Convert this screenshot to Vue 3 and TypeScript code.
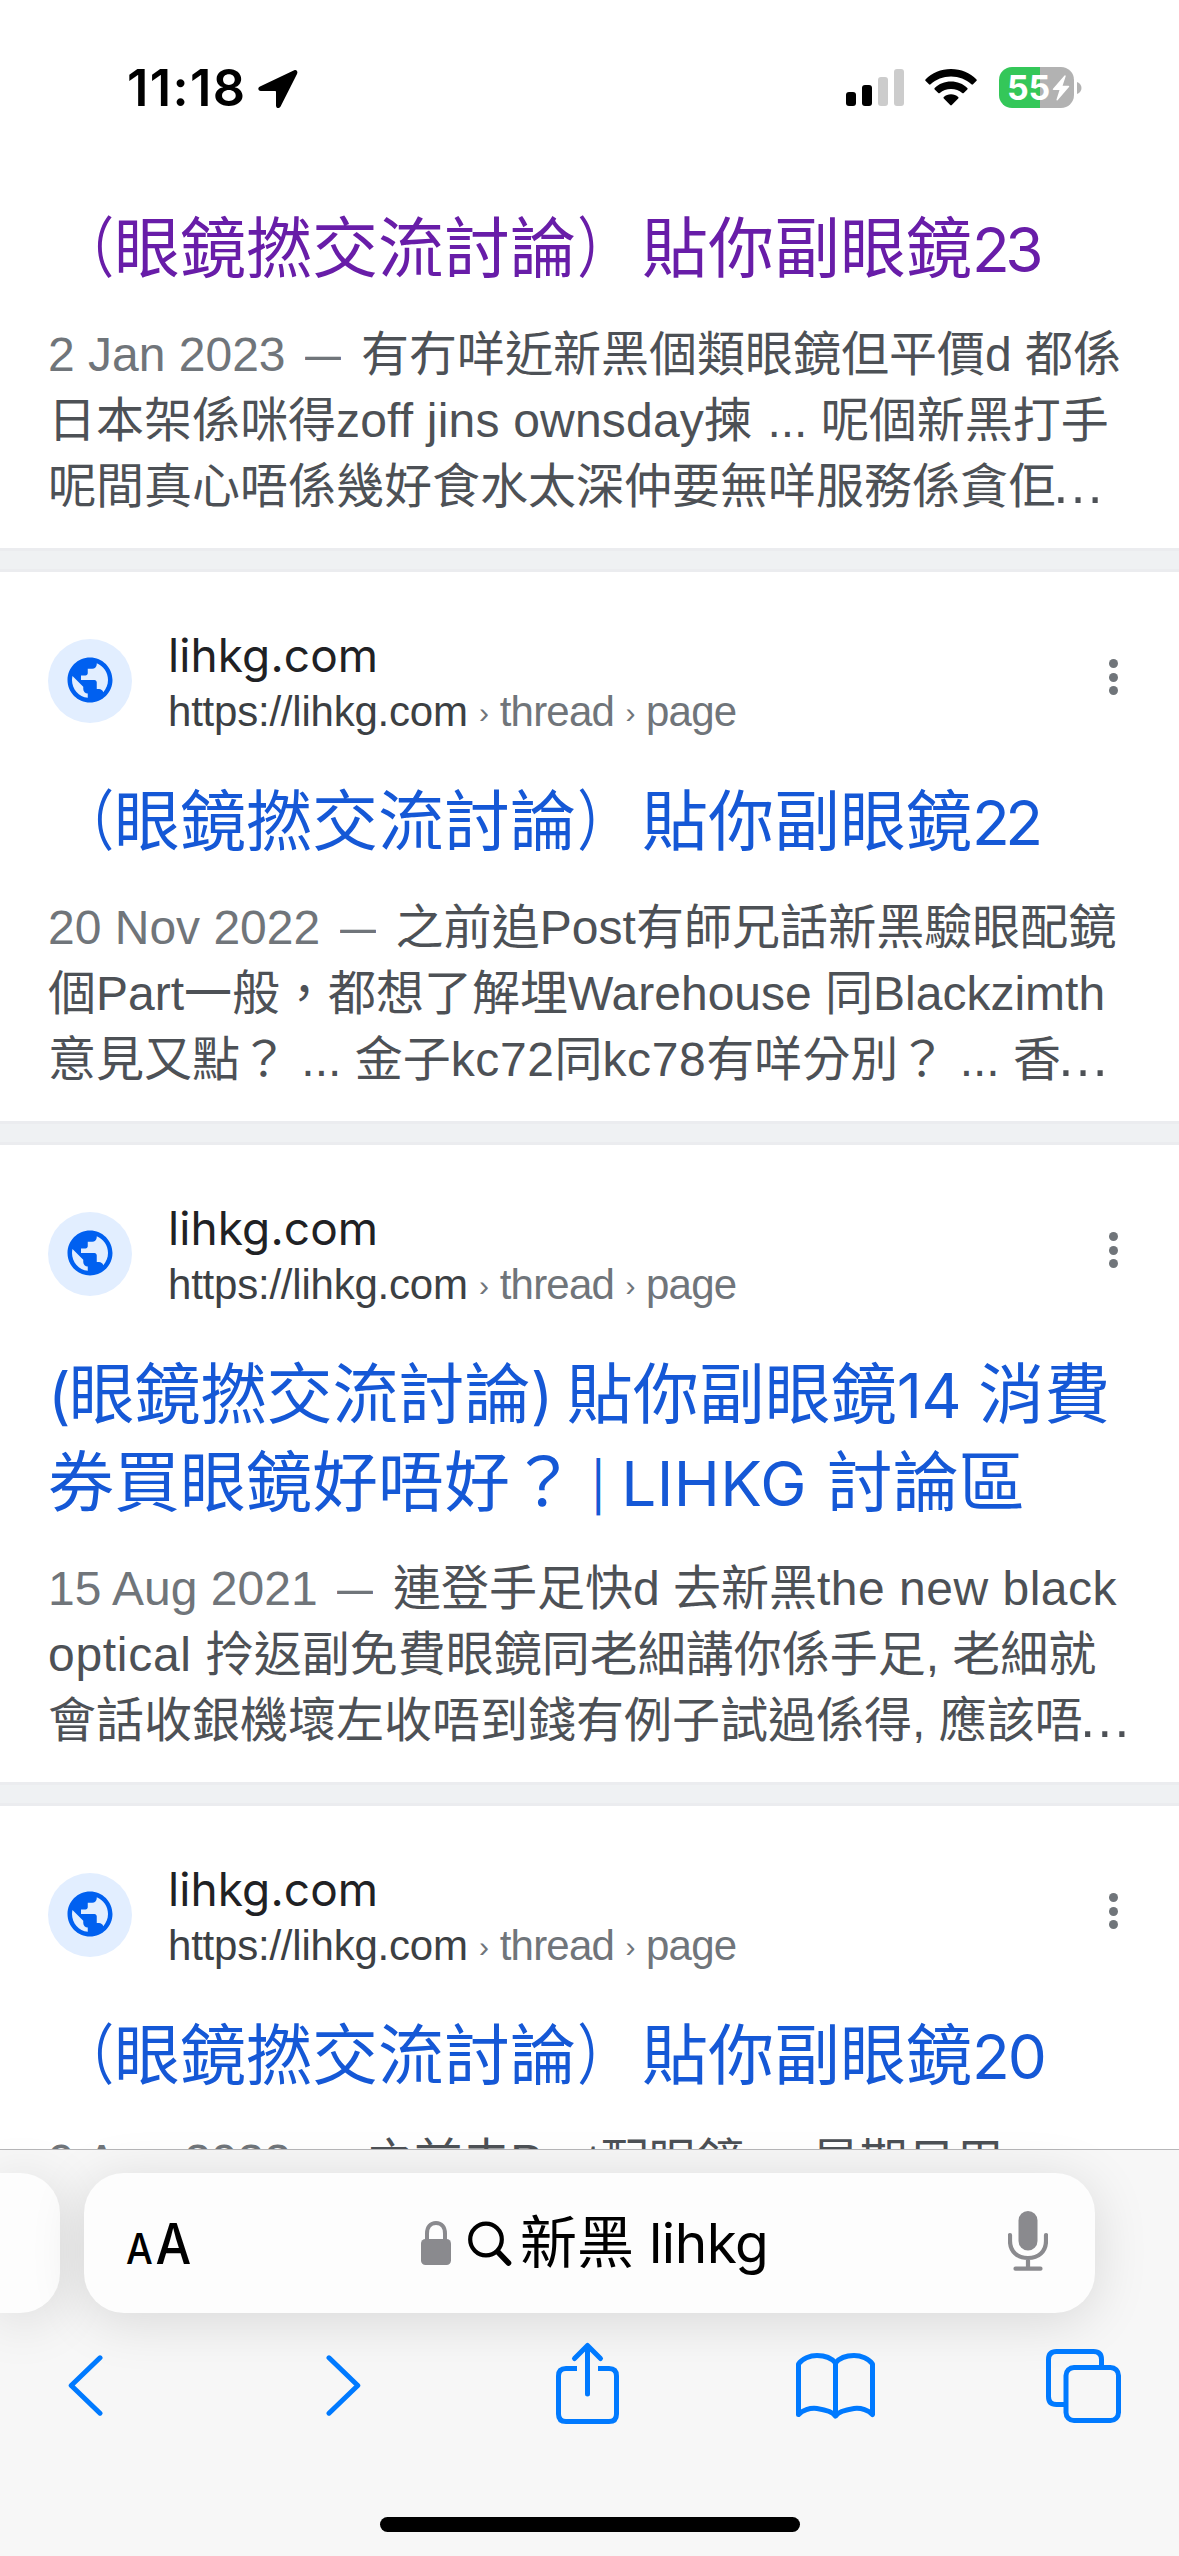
<script setup lang="ts">
// A piece of a line: its text and, optionally, its tracking in pixels.
type Piece = [text: string, tracking?: number]

interface Result {
  title: Piece[][]
  visited?: boolean
  header: boolean
  date: string
  lines: Piece[][]
  truncated?: boolean
}

const results: Result[] = [
  {
    title: [[['（'], ['眼鏡撚交流討論'], ['）'], ['貼你副眼鏡'], ['23', -4.5]]],
    visited: true,
    header: false,
    date: '2 Jan 2023',
    lines: [
      [['有冇咩近新黑個類眼鏡但平價d 都係']],
      [['日本架係咪得'], ['zoff jins ownsday', 0.2], ['揀 ', 1], ['... 呢個新黑打手']],
      [['呢間真心唔係幾好食水太深仲要無咩服務係貪佢']],
    ],
    truncated: true,
  },
  {
    title: [[['（'], ['眼鏡撚交流討論'], ['）'], ['貼你副眼鏡'], ['22', -4.5]]],
    header: true,
    date: '20 Nov 2022',
    lines: [
      [['之前追Post有師兄話新黑驗眼配鏡', 0.05]],
      [['個Part一般，都想了解埋Warehouse 同Blackzimth']],
      [['意見又點？ ... 金子'], ['kc72', 0.6], ['同'], ['kc78', 0.6], ['有咩分別？ ... 香']],
    ],
    truncated: true,
  },
  {
    title: [
      [['(', -2], ['眼鏡撚交流討論'], [') ', -2], ['貼你副眼鏡'], ['14 ', -0.4], ['消費']],
      [['券買眼鏡好唔好？'], [' ', -3.2], ['|'], [' ', -2.4], ['LIHKG', 0.4], [' ', 2.4], ['討論區']],
    ],
    header: true,
    date: '15 Aug 2021',
    lines: [
      [['連登手足快d '], ['去新黑'], ['the new black', 0.5]],
      [['optical ', 0.7], ['拎返副免費眼鏡同老細講你係手足, 老細就']],
      [['會話收銀機壞左收唔到錢有例子試過係得, 應該唔']],
    ],
    truncated: true,
  },
  {
    title: [[['（'], ['眼鏡撚交流討論'], ['）'], ['貼你副眼鏡'], ['20', -2]]],
    header: true,
    date: '9 Aug 2022',
    lines: [[['之前去'], ['Part', 0.6], ['配眼鏡 ... 星期日用']]],
  },
]

const isLatin = (text: string) => /^[\x20-\x7e]+$/.test(text)

function tracking(piece: Piece) {
  return piece[1] === undefined ? undefined : { letterSpacing: `${piece[1]}px` }
}

// Latin text and full-width brackets of a title are styled apart from the Chinese text.
function kind(text: string) {
  return {
    latin: isLatin(text),
    bar: text === '|',
    open: text === '（',
    close: text === '）',
  }
}
</script>

<template>
  <div class="screen">
    <header class="status">
      <span class="time">11:18</span>
      <svg class="location" width="40" height="40" viewBox="0 0 40 40">
        <path d="M36.2 1.2 2 17.4C-.6 18.7-.1 22 2.800 22H17.200q.8 0 .8.8V36.500c0 3 3.500 3.500 4.700.8L39 5C40.200 2.300 38.500.1 36.200 1.200Z" />
      </svg>
      <svg class="signal" width="58" height="37" viewBox="0 0 58 37">
        <rect x="0" y="23" width="10" height="14" rx="3" />
        <rect x="16" y="16" width="10" height="21" rx="3" />
        <rect class="off" x="32" y="8" width="10" height="29" rx="3" />
        <rect class="off" x="48" y="0" width="10" height="37" rx="3" />
      </svg>
      <svg class="wifi" width="52" height="37" viewBox="0 0 52 37">
        <path d="M26 0C36 0 45.200 4 51.300 10.300Q52.200 11.200 51.300 12L48 15.300Q47.200 16 46.400 15.300C41 10.300 34 7.400 26 7.400S11 10.300 5.600 15.300Q4.800 16 4 15.300L.7 12Q-.2 11.200.7 10.300C6.800 4 16 0 26 0Z" />
        <path d="M26 12.600C32.400 12.600 38 15 42.300 19Q43.100 19.800 42.300 20.600L38.700 24Q38 24.700 37.200 24C34.200 21.400 30.300 20 26 20S17.800 21.400 14.800 24Q14 24.700 13.300 24L9.700 20.600Q8.900 19.800 9.700 19C14 15 19.600 12.600 26 12.600Z" />
        <path d="M26 25.200C28.800 25.200 31.300 26.200 33.200 27.900Q34 28.700 33.200 29.500L26.800 36Q26 36.800 25.200 36L18.800 29.500Q18 28.700 18.800 27.900C20.700 26.200 23.200 25.200 26 25.200Z" />
      </svg>
      <div class="battery">
        <span class="level">55</span>
        <svg width="18" height="26" viewBox="0 0 18 26">
          <path d="M12.500.4 1 13.800Q.2 15 1.600 15H7.500L4.500 24.600Q4.400 26 5.600 25.300L17 12Q17.800 10.700 16.400 10.700H10.600L13.700 1.200Q13.700-.3 12.500.4Z" />
        </svg>
      </div>
      <svg class="nub" width="5" height="12" viewBox="0 0 5 12">
        <path d="M0 0C6 2 6 10 0 12Z" />
      </svg>
    </header>

    <main class="results">
      <article v-for="(r, i) in results" :key="i" class="result" :class="{ first: !r.header }">
        <div v-if="r.header" class="site">
          <span class="favicon">
            <svg width="54" height="54" viewBox="0 0 24 24">
              <path d="M12 2C6.480 2 2 6.480 2 12s4.480 10 10 10 10-4.480 10-10S17.520 2 12 2zm-1 17.930c-3.950-.49-7-3.850-7-7.930 0-.62.08-1.210.21-1.790L9 15v1c0 1.100.9 2 2 2v1.930zm6.900-2.540c-.26-.81-1-1.390-1.900-1.390h-1v-3c0-.55-.45-1-1-1H8v-2h2c.55 0 1-.45 1-1V7h2c1.100 0 2-.9 2-2v-.41c2.930 1.190 5 4.060 5 7.410 0 2.080-.8 3.970-2.100 5.390z" />
            </svg>
          </span>
          <span class="names">
            <span class="name">lihkg.com</span>
            <span class="url">https://lihkg.com<span class="crumb"><i>›</i>thread<i>›</i>page</span></span>
          </span>
          <span class="menu"><b></b><b></b><b></b></span>
        </div>
        <h3 :class="{ visited: r.visited }">
          <span v-for="(line, j) in r.title" :key="j" class="line"><span
            v-for="(piece, k) in line" :key="k" :class="kind(piece[0])" :style="tracking(piece)">{{ piece[0] }}</span></span>
        </h3>
        <p>
          <span v-for="(line, j) in r.lines" :key="j" class="line"><span
            v-if="j === 0" class="date">{{ r.date }} <span class="dash">—</span></span><span
            v-for="(piece, k) in line" :key="k" :style="tracking(piece)">{{ piece[0] }}</span><span
            v-if="r.truncated && j === r.lines.length - 1" class="more">…</span></span>
        </p>
      </article>
    </main>

    <footer class="toolbar">
      <div class="tabs">
        <div class="tab previous"></div>
        <div class="tab current">
          <span class="aa"><span class="small">A</span><span class="big">A</span></span>
          <svg class="lock" width="30" height="44" viewBox="0 0 30 44">
            <path class="shackle" d="M6 20V12.500C6 6 9.500 2 15 2s9 4 9 10.500V20" />
            <rect x="0" y="18" width="30" height="26" rx="4.500" />
          </svg>
          <svg class="search" width="44" height="46" viewBox="0 0 44 46">
            <circle cx="18" cy="18.500" r="15.800" />
            <path d="M30 31 40.500 42" />
          </svg>
          <span class="query">新黑<span class="word">lihkg</span></span>
          <svg class="mic" width="40" height="60" viewBox="0 0 40 60">
            <rect x="10.500" y="0" width="19" height="39.500" rx="9.500" />
            <path d="M2 24v6c0 10.500 7.500 17 18 17s18-6.500 18-17v-6M20 47v10.500M7.500 57.700h25" />
          </svg>
        </div>
      </div>
      <nav class="actions">
        <svg class="back" width="35" height="90" viewBox="0 0 35 90">
          <path d="M32 17.800 3.200 45.500 32 73.200" />
        </svg>
        <svg class="forward" width="35" height="90" viewBox="0 0 35 90">
          <path d="M3 17.800 31.800 45.500 3 73.200" />
        </svg>
        <svg class="share" width="63" height="90" viewBox="0 0 63 90">
          <path class="flat" d="M21 28.500H10Q2.500 28.500 2.500 36V74Q2.500 81.500 10 81.500H53Q60.500 81.500 60.500 74V36Q60.500 28.500 53 28.500H42" />
          <path d="M31.500 54V7M18.500 18.500 31.500 5.500 44.500 18.500" />
        </svg>
        <svg class="book" width="79" height="90" viewBox="0 0 79 90">
          <path d="M39.500 23C35.500 18 28 15.500 21 15.500S6 18.500 2.500 24V74.500C6 70.500 14 67.500 21 68.500S36 71 39.500 76C43 71 51 69.500 58 68.500S73 70.500 76.500 74.500V24C73 18.500 65 15.500 58 15.500S43.500 18 39.500 23ZM39.500 23V76" />
        </svg>
        <svg class="pages" width="75" height="90" viewBox="0 0 75 90">
          <rect x="20" y="27.500" width="52.500" height="53" rx="8" />
          <path class="flat" d="M55.500 27V19.500Q55.500 11.500 47.500 11.500H10.500Q2.500 11.500 2.500 19.500V56.500Q2.500 64.500 10.500 64.500H19" />
        </svg>
      </nav>
      <div class="home"></div>
    </footer>
  </div>
</template>

<style>
body {
  margin: 0;
  background: #fff;
}
</style>

<style scoped>
.screen {
  width: 1179px;
  height: 2556px;
  display: flex;
  flex-direction: column;
  overflow: hidden;
  background: #fff;
  font-family: "Liberation Sans", "Noto Sans CJK TC", sans-serif;
  box-sizing: border-box;
}
svg {
  display: block;
  flex: none;
}

/* Status bar */
.status {
  height: 150px;
  flex: none;
  display: flex;
  align-items: flex-start;
  padding: 0 97px 0 127px;
  box-sizing: border-box;
}
.time {
  width: 131px;
  margin-top: 58px;
  line-height: 60px;
  font-family: Inter, sans-serif;
  font-weight: 600;
  font-size: 50.5px;
  letter-spacing: 1.4px;
  white-space: nowrap;
}
.location { margin-top: 69px; }
.signal { margin: 69px 0 0 auto; }
.signal .off { fill: #ccc; }
.wifi { margin: 69px 0 0 21px; }
.battery {
  width: 75px;
  height: 41px;
  margin: 67px 0 0 22px;
  border-radius: 13px;
  display: flex;
  align-items: center;
  padding-left: 8px;
  box-sizing: border-box;
  background: linear-gradient(90deg, #34c759 41px, #b2b2b2 41px);
}
.battery svg { fill: #fff; margin-left: 1px; }
.level {
  width: 44px;
  color: #fff;
  font-family: Inter, sans-serif;
  font-weight: 700;
  font-size: 34px;
  line-height: 41px;
  letter-spacing: -0.3px;
}
.nub { margin: 82px 0 0 3px; fill: #b2b2b2; }

/* Search results */
.results {
  flex: 1;
  min-height: 0;
  overflow: hidden;
}
.result {
  padding: 67px 48px 28px;
}
.result.first { padding-top: 53px; }
.result + .result {
  border-top: 3px solid #ebecef;
}
.result + .result::before {
  content: "";
  display: block;
  height: 18px;
  margin: -67px -48px 67px;
  background: #eff1f3;
  border-bottom: 3px solid #ebecef;
}
.site {
  height: 84px;
  display: flex;
  align-items: center;
  margin-bottom: 54px;
}
.favicon {
  width: 84px;
  height: 84px;
  flex: none;
  display: flex;
  align-items: center;
  justify-content: center;
  border-radius: 50%;
  background: #e2eeff;
}
.favicon svg { fill: #0060f0; margin-bottom: 2px; }
.names {
  display: flex;
  flex-direction: column;
  gap: 7px;
  margin: 2px 0 0 36px;
}
.name {
  font-family: Inter, sans-serif;
  font-size: 46px;
  line-height: 52px;
  letter-spacing: 0.1px;
  color: #202124;
}
.url {
  font-size: 42px;
  line-height: 48px;
  letter-spacing: -0.22px;
  color: #3c4043;
  white-space: nowrap;
}
.crumb {
  color: #70757a;
  letter-spacing: -0.8px;
}
.crumb i {
  display: inline-block;
  width: 32px;
  text-align: center;
  font-style: normal;
  font-size: 30px;
  line-height: 30px;
  transform: translateY(-3px);
}
.menu {
  display: flex;
  flex-direction: column;
  gap: 4.5px;
  margin: 0 13px 8px auto;
}
.menu b {
  width: 9px;
  height: 9px;
  border-radius: 50%;
  background: #70757a;
}
.line {
  display: block;
  white-space: pre;
}
h3 {
  margin: 0 0 30px;
  font-family: Inter, "Noto Sans CJK TC", sans-serif;
  font-weight: 400;
  font-size: 66px;
  line-height: 88px;
  color: #1558d6;
}
.first h3 { padding-top: 1px; }
h3.visited { color: #681da8; }
h3 .latin {
  font-size: 62px;
  line-height: 60px;
}
h3 .bar {
  font-size: 48px;
  line-height: 40px;
  vertical-align: 2px;
}
.open,
.close {
  display: inline-block;
  line-height: 60px;
  transform: scaleX(0.8);
  transform-origin: 100% 50%;
}
.close { transform-origin: 10% 50%; }
p {
  margin: 0;
  font-size: 48px;
  line-height: 66px;
  color: #4d5156;
}
.date { color: #70757a; }
.dash {
  display: inline-block;
  transform: scaleX(0.75);
  margin-right: 14px;
}
.more {
  font-size: 54px;
  line-height: 60px;
  margin-left: -5px;
}

/* Browser toolbar */
.toolbar {
  position: relative;
  height: 407px;
  flex: none;
  box-sizing: border-box;
  border-top: 1px solid #b7b7b9;
  padding-top: 23px;
  background: #f7f7f7;
}
.tabs {
  display: flex;
  gap: 24px;
}
.tab {
  height: 140px;
  box-sizing: border-box;
  background: #fdfdfd;
  box-shadow: 0 8px 54px rgba(0, 0, 0, 0.13);
}
.previous {
  width: 60px;
  border-radius: 0 40px 40px 0;
}
.current {
  width: 1011px;
  border-radius: 40px;
  display: flex;
  align-items: flex-start;
  padding: 0 47px 0 43px;
}
.aa {
  display: flex;
  align-items: baseline;
  width: 75px;
  margin-top: 33px;
  line-height: 76px;
  font-family: Inter, sans-serif;
  font-weight: 500;
  transform: scaleX(0.9);
  transform-origin: 0 0;
  margin-right: -9px;
}
.small { font-size: 42px; margin-left: -1px; }
.big { font-size: 56px; margin-left: 3px; }
.lock { margin: 48px 0 0 228px; fill: #8a8a8e; }
.shackle {
  fill: none;
  stroke: #8a8a8e;
  stroke-width: 4;
}
.search {
  margin: 48px 0 0 17px;
  fill: none;
  stroke: #000;
  stroke-width: 4.2;
  stroke-linecap: round;
}
.search path { stroke-width: 5.6; }
.query {
  margin: 30px 0 0 8px;
  font-family: Inter, "Noto Sans CJK TC", sans-serif;
  font-size: 57px;
  line-height: 80px;
  white-space: nowrap;
}
.word {
  font-size: 55px;
  letter-spacing: -0.5px;
  margin-left: 15px;
}
.mic {
  margin: 38px 0 0 auto;
  fill: #8a8a8e;
}
.mic path {
  fill: none;
  stroke: #8a8a8e;
  stroke-width: 4.2;
  stroke-linecap: round;
}
.actions {
  display: flex;
  margin-top: 27px;
  padding-left: 68px;
}
.actions svg {
  fill: none;
  stroke: #007aff;
  stroke-width: 5;
  stroke-linecap: round;
  stroke-linejoin: round;
}
.actions .flat { stroke-linecap: butt; }
.forward { margin-left: 223px; }
.share { margin-left: 195px; }
.book { margin-left: 177px; }
.pages { margin-left: 171px; }
.home {
  width: 420px;
  height: 15px;
  margin: 87px auto 0;
  border-radius: 8px;
  background: #000;
}
</style>
